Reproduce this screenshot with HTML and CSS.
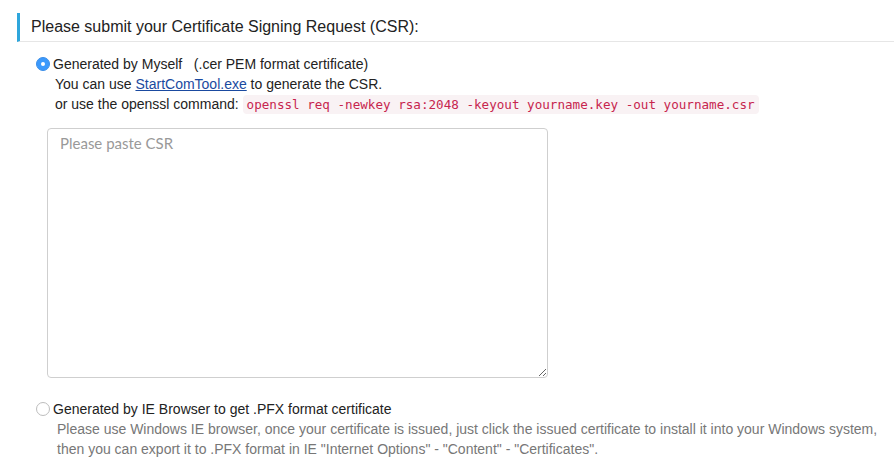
FILE: index.html
```html
<!DOCTYPE html>
<html>
<head>
<meta charset="utf-8">
<link rel="stylesheet" href="styles.css">
</head>
<body>
<div class="panel">
  <h3 class="title">Please submit your Certificate Signing Request (CSR):</h3>
  <div class="option">
    <div class="option-head">
      <span class="radio radio-checked"></span>
      <span class="option-label">Generated by Myself&nbsp;&nbsp;&nbsp;(.cer PEM format certificate)</span>
    </div>
    <div class="option-body">
      <div class="line">You can use <a class="link" href="#">StartComTool.exe</a> to generate the CSR.</div>
      <div class="line">or use the openssl command:&nbsp;<code class="cmd">openssl req -newkey rsa:2048 -keyout yourname.key -out yourname.csr</code></div>
    </div>
    <textarea class="csr" placeholder="Please paste CSR"></textarea>
  </div>
  <div class="option option-second">
    <div class="option-head">
      <span class="radio"></span>
      <span class="option-label">Generated by IE Browser to get .PFX format certificate</span>
    </div>
    <div class="option-body muted">
      <div class="line">Please use Windows IE browser, once your certificate is issued, just click the issued certificate to install it into your Windows system,</div>
      <div class="line">then you can export it to .PFX format in IE "Internet Options" - "Content" - "Certificates".</div>
    </div>
  </div>
</div>
</body>
</html>
```
FILE: styles.css
```css
html, body {
  margin: 0;
  padding: 0;
  background: #fff;
}
body {
  font-family: "Liberation Sans", Arial, sans-serif;
  color: #222;
  font-size: 14px;
}
.panel {
  padding: 13px 0 0 17px;
}
.title {
  margin: 0;
  font-weight: normal;
  font-size: 16px;
  line-height: 28px;
  color: #222;
  border-left: 3px solid #2ea6dc;
  border-bottom: 1px solid #e6e6e6;
  padding-left: 11px;
}
.option {
  padding-left: 19px;
  margin-top: 12px;
}
.option-head {
  display: flex;
  align-items: center;
  height: 20px;
  line-height: 20px;
}
.radio {
  width: 14px;
  height: 14px;
  border-radius: 50%;
  box-sizing: border-box;
  border: 1px solid #bdbdbd;
  background: #fff;
  margin-right: 3px;
  flex: none;
  position: relative;
}
.radio-checked {
  background: #3b99fc;
  border-color: #3b8ee8;
}
.radio-checked::after {
  content: "";
  position: absolute;
  left: 4px;
  top: 4px;
  width: 4px;
  height: 4px;
  border-radius: 50%;
  background: #fff;
}
.option-label {
  color: #222;
}
.option-body {
  padding-left: 19px;
}
.line {
  line-height: 20px;
  white-space: nowrap;
}
.link {
  color: #1a4aa0;
  text-decoration: underline;
}
.cmd {
  font-family: "DejaVu Sans Mono", "Liberation Mono", monospace;
  font-size: 12.6px;
  color: #c7254e;
  background: #f9f2f4;
  border-radius: 4px;
  padding: 2px 4px;
}
.csr {
  display: block;
  margin: 13px 0 0 11px;
  width: 501px;
  height: 250px;
  box-sizing: border-box;
  border: 1px solid #cfcfcf;
  border-radius: 4px;
  padding: 5px 12px;
  font-family: "Lato", "Noto Sans", sans-serif;
  font-size: 15px;
  color: #333;
  resize: vertical;
}
.csr::placeholder {
  color: #999;
}
.option-second {
  margin-top: 21px;
}
.option-second .option-body {
  padding-left: 21px;
}
.muted {
  color: #777;
}
```
